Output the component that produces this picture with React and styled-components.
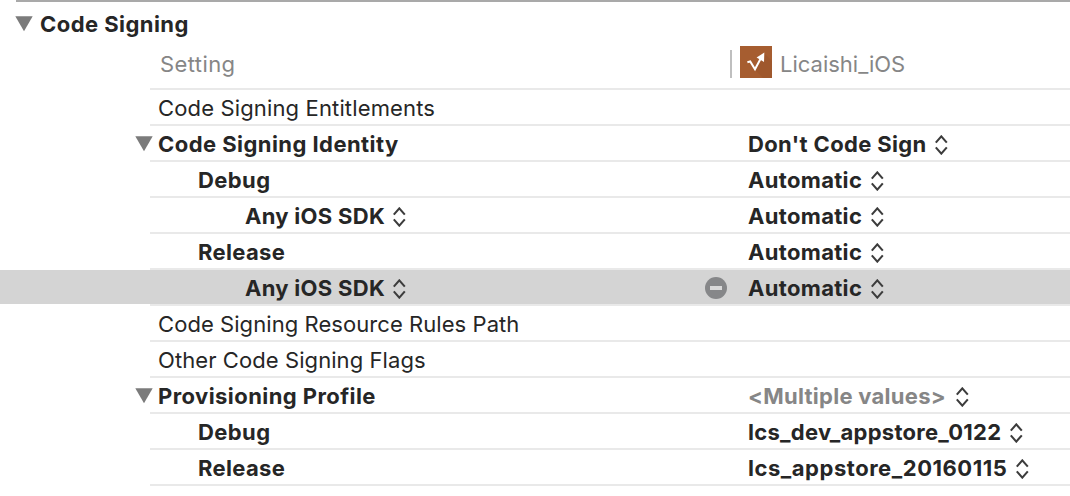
import React from 'react';
import styled, { createGlobalStyle } from 'styled-components';

const GlobalStyle = createGlobalStyle`
  * { box-sizing: border-box; }
  body {
    margin: 0;
    background: #fff;
    color: #262626;
    font: 400 22px/34px Inter, "Liberation Sans", sans-serif;
    overflow: hidden;
  }
  svg { display: block; flex: none; }
`;

const Panel = styled.main`
  height: 496px;
  display: flex;
  flex-direction: column;
`;

const TopRule = styled.div`
  flex: none;
  height: 2px;
  margin-left: 16px;
  background: #a9a9a9;
`;

const SectionHeader = styled.header`
  flex: none;
  display: flex;
  align-items: center;
  gap: 2px;
  height: 43px;
  padding-left: 15px;
`;

const Text = styled.span`
  flex: none;
  white-space: nowrap;
  font-weight: ${(p) => (p.$bold ? 700 : 400)};
  letter-spacing: ${(p) => p.$track || 0}px;
  width: ${(p) => (p.$width ? `${p.$width}px` : 'auto')};
  color: ${(p) => (p.$muted ? '#868686' : 'inherit')};
`;

const Row = styled.div`
  flex: none;
  display: grid;
  grid-template-columns: 135px 569px 44px 1fr;
  height: ${(p) => p.$height || 36}px;
  background: ${(p) =>
    p.$selected
      ? 'linear-gradient(#d4d4d4, #d4d4d4) 0 0 / 100% 34px no-repeat,'
      : ''}
    linear-gradient(#e9e9e9, #e9e9e9) 150px 100% / 100% 2px no-repeat;
  padding-bottom: 2px;
`;

const NameCell = styled.div`
  grid-column: 2;
  display: flex;
  align-items: center;
  padding-top: 1px;
  padding-left: ${(p) => p.$indent}px;
  padding-bottom: ${(p) => p.$lift || 0}px;
`;

const ActionCell = styled.div`
  grid-column: 3;
  display: flex;
  align-items: center;
  padding: 1px 0 0 1px;
`;

const ValueCell = styled.div`
  grid-column: 4;
  display: flex;
  align-items: center;
  padding-top: 1px;
`;

const TargetCell = styled.div`
  grid-column: 3 / -1;
  display: flex;
  align-items: flex-start;
  padding: 1px 0 0 26px;
`;

const Divider = styled.div`
  width: 2px;
  height: 28px;
  margin: 4px 8px 0 0;
  background: #bfbfbf;
`;

const TargetName = styled(Text)`
  margin: 1px 0 0 8px;
`;

const DisclosureSvg = styled.svg`
  margin-right: 5px;
`;

const StepperSvg = styled.svg`
  margin-top: 1px;
`;

const Disclosure = () => (
  <DisclosureSvg width="18" height="16" viewBox="0 0 18 16">
    <path d="M0.3 0.2H17.7L9 15.2Z" fill="#7b7b7b" />
  </DisclosureSvg>
);

const Stepper = () => (
  <StepperSvg width="13" height="20" viewBox="0 0 13 20" fill="none" stroke="#3c3c3c" strokeWidth="2.1">
    <path d="M0.8 7.6L6.3 1.4L11.8 7.6M0.8 12.4L6.3 18.6L11.8 12.4" />
  </StepperSvg>
);

const RemoveIcon = () => (
  <svg width="22" height="22" viewBox="0 0 22 22">
    <circle cx="11" cy="11" r="11" fill="#868789" />
    <path d="M5 9H17V13H5Z" fill="#d9d9d9" />
  </svg>
);

const AppIcon = () => (
  <svg width="32" height="32" viewBox="0 0 32 32">
    <path d="M0 0H32V32H0Z" fill="#a65d30" />
    <path d="M24 7L32 15V32H23L15 24Z" fill="#9f582d" />
    <path d="M7.4 16.2L10.2 15.4L15 23.3L21 12" fill="none" stroke="#fff" strokeWidth="2" />
    <path d="M24.3 6.5L16.6 11.4L24 16Z" fill="#fff" />
  </svg>
);

const rows = [
  { name: 'Code Signing Entitlements', track: 0.143 },
  { name: 'Code Signing Identity', track: 0.446, open: true, value: "Don't Code Sign", valueTrack: 0.36, width: 187 },
  { name: 'Debug', track: 0.4, level: 1, value: 'Automatic', valueTrack: 0.32, width: 123 },
  { name: 'Any iOS SDK', track: 0.29, level: 2, value: 'Automatic', valueTrack: 0.32, width: 123 },
  { name: 'Release', track: 0.34, level: 1, value: 'Automatic', valueTrack: 0.32, width: 123 },
  { name: 'Any iOS SDK', track: 0.29, level: 2, value: 'Automatic', valueTrack: 0.32, width: 123, selected: true },
  { name: 'Code Signing Resource Rules Path', track: 0.062 },
  { name: 'Other Code Signing Flags', track: 0.08 },
  { name: 'Provisioning Profile', track: 0.43, open: true, value: '<Multiple values>', valueTrack: 0.27, width: 208, muted: true },
  { name: 'Debug', track: 0.4, level: 1, value: 'lcs_dev_appstore_0122', valueTrack: 0.28, width: 262 },
  { name: 'Release', track: 0.34, level: 1, value: 'lcs_appstore_20160115', valueTrack: 0.53, width: 268 },
];

const indents = [23, 63, 110];

function SettingRow({ row }) {
  const level = row.level || 0;
  return (
    <Row $selected={row.selected}>
      <NameCell $indent={row.open ? 0 : indents[level]}>
        {row.open && <Disclosure />}
        <Text $bold={!!row.value} $track={row.track} $width={level === 2 ? 148 : 0}>
          {row.name}
        </Text>
        {level === 2 && <Stepper />}
      </NameCell>
      <ActionCell>{row.selected && <RemoveIcon />}</ActionCell>
      <ValueCell>
        {row.value && (
          <>
            <Text $bold $track={row.valueTrack} $width={row.width} $muted={row.muted}>
              {row.value}
            </Text>
            <Stepper />
          </>
        )}
      </ValueCell>
    </Row>
  );
}

export default function App() {
  return (
    <Panel>
      <GlobalStyle />
      <TopRule />
      <SectionHeader>
        <Disclosure />
        <Text $bold $track={0.448}>Code Signing</Text>
      </SectionHeader>
      <Row $height={45}>
        <NameCell $indent={25} $lift={7}>
          <Text $muted $track={0.4}>Setting</Text>
        </NameCell>
        <TargetCell>
          <Divider />
          <AppIcon />
          <TargetName $muted $track={0}>Licaishi_iOS</TargetName>
        </TargetCell>
      </Row>
      {rows.map((row, i) => (
        <SettingRow key={i} row={row} />
      ))}
    </Panel>
  );
}
